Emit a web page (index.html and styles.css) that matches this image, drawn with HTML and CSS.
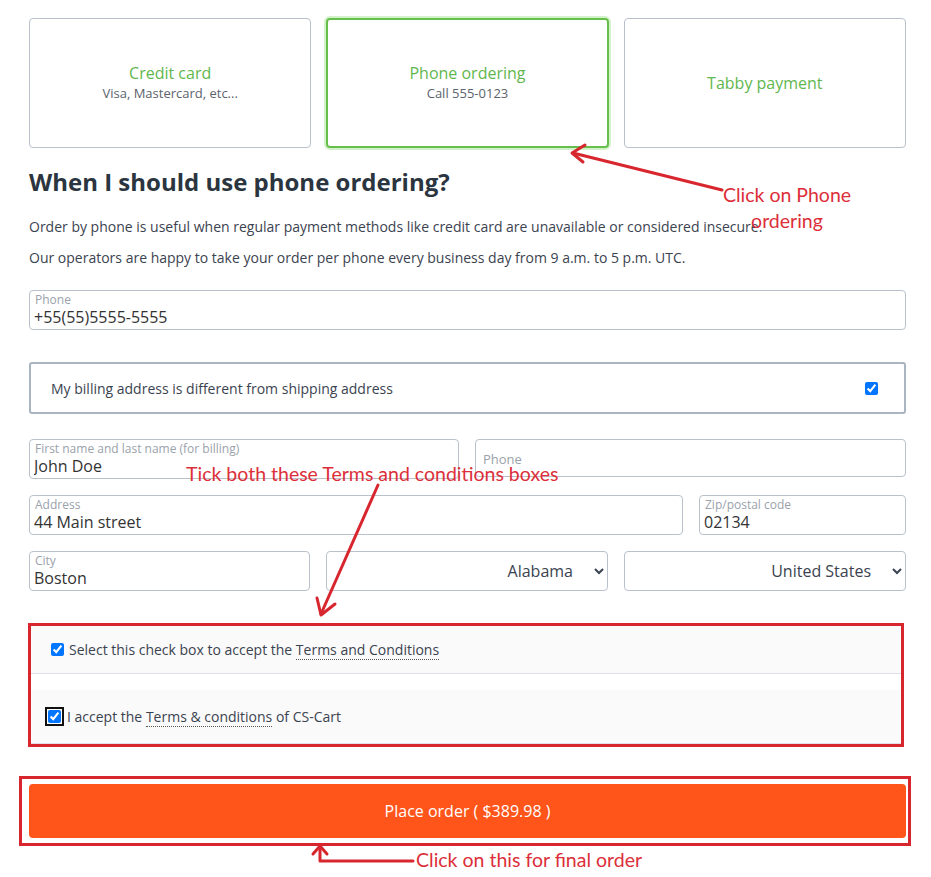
FILE: index.html
```html
<!DOCTYPE html>
<html lang="en">
<head>
  <meta charset="UTF-8" />
  <meta name="viewport" content="width=device-width, initial-scale=1.0"/>
  <title>Checkout - Payment</title>
  <link rel="stylesheet" href="styles.css">
</head>
<body>

<main class="checkout">
  <!-- payment method tiles -->
  <div class="methods">
    <div class="method">
      <span class="method-title">Credit card</span>
      <span class="method-sub">Visa, Mastercard, etc...</span>
    </div>
    <div class="method active">
      <span class="method-title">Phone ordering</span>
      <span class="method-sub">Call 555-0123</span>
    </div>
    <div class="method">
      <span class="method-title">Tabby payment</span>
    </div>
  </div>

  <h2 class="info-title">When I should use phone ordering?</h2>
  <p class="info">Order by phone is useful when regular payment methods like credit card are unavailable or considered insecure.</p>
  <p class="info">Our operators are happy to take your order per phone every business day from 9 a.m. to 5 p.m. UTC.</p>

  <label class="field phone-main">
    <span class="field-label">Phone</span>
    <input type="text" value="+55(55)5555-5555" />
  </label>

  <label class="billing-toggle">
    <span>My billing address is different from shipping address</span>
    <input type="checkbox" checked />
  </label>

  <div class="billing">
    <div class="row row-name">
      <label class="field">
        <span class="field-label">First name and last name (for billing)</span>
        <input type="text" value="John Doe" />
      </label>
      <label class="field empty">
        <span class="field-label">Phone</span>
      </label>
    </div>
    <div class="row row-address">
      <label class="field">
        <span class="field-label">Address</span>
        <input type="text" value="44 Main street" />
      </label>
      <label class="field">
        <span class="field-label">Zip/postal code</span>
        <input type="text" value="02134" />
      </label>
    </div>
    <div class="row row-city">
      <label class="field">
        <span class="field-label">City</span>
        <input type="text" value="Boston" />
      </label>
      <select class="select"><option>Alabama</option></select>
      <select class="select"><option>United States</option></select>
    </div>
  </div>

  <!-- terms, outlined by the annotation box -->
  <div class="terms mark">
    <label class="term">
      <input type="checkbox" checked />
      <span>Select this check box to accept the <a href="#" class="dotted">Terms and Conditions</a></span>
    </label>
    <label class="term term-focus">
      <input type="checkbox" checked />
      <span>I accept the <a href="#" class="dotted">Terms &amp; conditions</a> of CS-Cart</span>
    </label>
  </div>

  <div class="place mark">
    <button type="button" class="place-btn">Place order ( $389.98 )</button>
  </div>
</main>

<!-- annotation layer -->
<div class="notes">
  <svg class="arrows" width="931" height="877" viewBox="0 0 931 877">
    <g fill="none" stroke="#d8262f" stroke-width="3" stroke-linecap="round" stroke-linejoin="round">
      <path d="M722 190 L573 153" />
      <path d="M585 145 L572 153 L583 162" />
      <path d="M378 485 L321 614" />
      <path d="M317 598 L321 615 L335 604" />
      <path d="M413 861 L320 861 L320 847" />
      <path d="M313 854 L320 846 L327 854" />
    </g>
  </svg>
  <div class="note note-phone">Click on Phone<br>ordering</div>
  <div class="note note-terms">Tick both these Terms and conditions boxes</div>
  <div class="note note-order">Click on this for final order</div>
</div>

</body>
</html>
```

FILE: styles.css
```css
:root {
  --text:#3b4350; --muted:#9aa2ab; --line:#b9c2cc; --green:#5fb74e;
  --mark:#d8262f; --orange:#ff541a; --radius:4px;
}
body{margin:0;font-family:"Open Sans",sans-serif;color:var(--text);background:#fff;}
.checkout{width:877px;padding:18px 0 0 29px;}

.methods{display:grid;grid-template-columns:repeat(3,1fr);gap:15px}
.method{height:128px;border:1px solid var(--line);border-radius:var(--radius);
        display:flex;flex-direction:column;align-items:center;justify-content:center}
.method.active{border:2px solid #66bf4b;box-shadow:0 0 0 2px #d3f2ca;height:126px}
.method-title{color:var(--green);font-size:16px;line-height:21px}
.method-sub{color:#5b636c;font-size:13px;line-height:19px}

.info-title{font-size:24px;line-height:30px;font-weight:700;color:#2b3540;margin:19px 0 20px}
.info{font-size:14px;line-height:20px;margin:0 0 11px}

.field{display:flex;flex-direction:column;border:1px solid var(--line);border-radius:var(--radius);
       padding:2px 4px 0;height:36px;box-sizing:content-box;min-width:0}
.field-label{font-size:12px;line-height:14px;color:var(--muted);padding-left:1px;white-space:nowrap}
.field input{border:none;outline:none;padding:0;font:16px/20px "Open Sans",sans-serif;color:#333;
             background:none;width:100%;min-width:0}
.field.empty{justify-content:center;padding:0 6px}
.field.empty .field-label{font-size:13px;line-height:18px;padding-top:2px}
.phone-main{margin-top:22px}

.billing-toggle{display:flex;align-items:center;justify-content:space-between;margin-top:32px;
                height:48px;border:2px solid #aab5c2;border-radius:3px;padding:0 26px 0 20px;
                font-size:14px}
.billing-toggle input{margin:0;width:13px;height:13px}

.billing{display:flex;flex-direction:column;gap:16px;margin-top:25px}
.row{display:grid;gap:16px}
.row-name{grid-template-columns:430px minmax(0,1fr)}
.row-address{grid-template-columns:654px minmax(0,1fr)}
.row-city{grid-template-columns:281px 282px minmax(0,1fr)}
.select{height:40px;border:1px solid var(--line);border-radius:var(--radius);background:#fff;min-width:0;
        font:16px "Open Sans",sans-serif;color:#3b4350;text-align:right;text-align-last:right;padding:0 18px 0 6px}
.select option{direction:ltr}

.mark{border:3px solid var(--mark)}
.terms{margin:32px 0 0 -1px;width:870px;background:#fff}
.term{display:flex;align-items:center;gap:5px;background:#fafafa;border-bottom:1px solid #e0e0e8;
      font-size:14px;padding:0 20px;height:47px}
.term input{margin:0;width:13px;height:13px}
.term-focus{margin-top:16px;height:53px;padding-left:17px}
.term-focus input{box-shadow:0 0 0 1px #fff,0 0 0 3px #111;border-radius:2px;margin-right:1px}
.dotted{color:inherit;text-decoration:none;border-bottom:1px dotted #555}

.place{margin:29px 0 0 -10px;width:877px;padding:5px 2px 5px 7px}
.place-btn{display:block;width:100%;height:54px;border:none;border-radius:var(--radius);
           background:var(--orange);color:#fff;font:16px "Open Sans",sans-serif;cursor:pointer}

.notes{position:absolute;top:0;left:0;width:931px;height:877px;pointer-events:none}
.arrows{position:absolute;top:0;left:0}
.note{position:absolute;font-family:Lato,sans-serif;font-size:19.5px;line-height:26px;color:#dc2f3a}
.note-phone{left:712px;top:182px;width:150px;text-align:center}
.note-terms{left:186px;top:461px}
.note-order{left:416px;top:847px}
```
